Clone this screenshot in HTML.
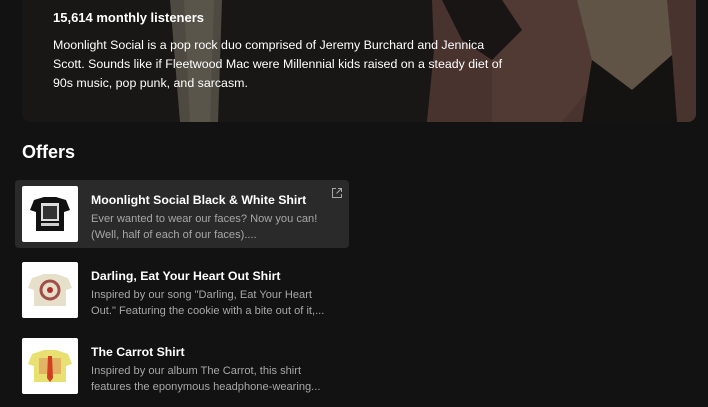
<!DOCTYPE html>
<html><head><meta charset="utf-8"><style>
*{margin:0;padding:0;box-sizing:border-box}
body{width:708px;height:407px;background:#121212;font-family:"Liberation Sans",sans-serif;overflow:hidden;position:relative;color:#fff}
.banner{position:absolute;left:22px;top:0;width:674px;height:122px;border-radius:0 0 8px 8px;overflow:hidden}
.t{position:absolute;white-space:nowrap}
.card{position:absolute;left:15px;width:334px;height:68px;border-radius:4px}
.img{position:absolute;left:7px;top:6px;width:56px;height:56px;background:#fff;border-radius:2px;overflow:hidden}
.title{position:absolute;left:76px;top:13px;font-size:12.3px;font-weight:bold;color:#fff;white-space:nowrap}
.desc{position:absolute;left:76px;top:31px;font-size:11.1px;line-height:16px;color:#a7a7a7;white-space:nowrap}
</style></head><body>
<div class="banner">
<svg width="674" height="122" viewBox="0 0 674 122">
<rect width="674" height="122" fill="#1d1b19"/>
<polygon points="148,0 200,0 196,122 158,122" fill="#5a554b"/>
<polygon points="162,0 192,0 188,122 168,122" fill="#6c675b" opacity=".7"/>
<polygon points="410,0 674,0 674,122 405,122 412,50" fill="#543b35"/>
<polygon points="470,0 560,0 575,80 540,122 470,122" fill="#5c423b"/>
<polygon points="420,0 480,0 500,30 470,60 440,40" fill="#1c1817"/>
<polygon points="555,0 645,0 650,55 610,90 570,60" fill="#6e6051"/>
<polygon points="570,60 610,90 650,55 655,122 560,122" fill="#181615"/>
<rect x="0" y="0" width="674" height="122" fill="#000" opacity=".12"/>
</svg>
<div class="t" style="left:31px;top:10px;font-size:13px;font-weight:bold">15,614 monthly listeners</div>
<div class="t" style="left:31px;top:36px;font-size:12.4px;line-height:19px;color:#fff">Moonlight Social is a pop rock duo comprised of Jeremy Burchard and Jennica<br>Scott. Sounds like if Fleetwood Mac were Millennial kids raised on a steady diet of<br>90s music, pop punk, and sarcasm.</div>
</div>
<div class="t" style="left:22px;top:142px;font-size:18px;font-weight:bold">Offers</div>

<div class="card" style="top:180px;background:#2a2a2a">
<div class="img"><svg width="56" height="56"><polygon points="12,14 22,11 34,11 44,14 48,24 42,26 42,45 14,45 14,26 8,24" fill="#111"/><rect x="19" y="17" width="18" height="18" fill="#ddd"/><rect x="21" y="20" width="14" height="13" fill="#333"/><rect x="19" y="37" width="18" height="3" fill="#ccc"/></svg></div>
<div class="title">Moonlight Social Black &amp; White Shirt</div>
<div class="desc">Ever wanted to wear our faces? Now you can!<br>(Well, half of each of our faces)....</div>
<svg style="position:absolute;left:316px;top:7px" width="12" height="12" viewBox="0 0 12 12" fill="none" stroke="#a7a7a7" stroke-width="1"><path d="M5 1.5H1.5v9h9V7M7 1.5h3.5V5M10.5 1.5L5.5 6.5"/></svg>
</div>
<div class="card" style="top:256px">
<div class="img"><svg width="56" height="56"><polygon points="10,16 22,12 34,12 46,16 50,26 44,28 44,44 12,44 12,28 6,26" fill="#e6dfc9"/><circle cx="28" cy="28" r="9" fill="none" stroke="#a0504a" stroke-width="3"/><circle cx="28" cy="28" r="3" fill="#b03030"/></svg></div>
<div class="title">Darling, Eat Your Heart Out Shirt</div>
<div class="desc">Inspired by our song "Darling, Eat Your Heart<br>Out." Featuring the cookie with a bite out of it,...</div>
</div>
<div class="card" style="top:332px">
<div class="img"><svg width="56" height="56"><polygon points="10,16 22,12 34,12 46,16 50,26 44,28 44,44 12,44 12,28 6,26" fill="#e8e070"/><rect x="17" y="20" width="22" height="16" fill="#e0a060" opacity=".7"/><polygon points="26,18 30,18 31,40 28,44 25,40" fill="#d04020"/></svg></div>
<div class="title">The Carrot Shirt</div>
<div class="desc">Inspired by our album The Carrot, this shirt<br>features the eponymous headphone-wearing...</div>
</div>
</body></html>
